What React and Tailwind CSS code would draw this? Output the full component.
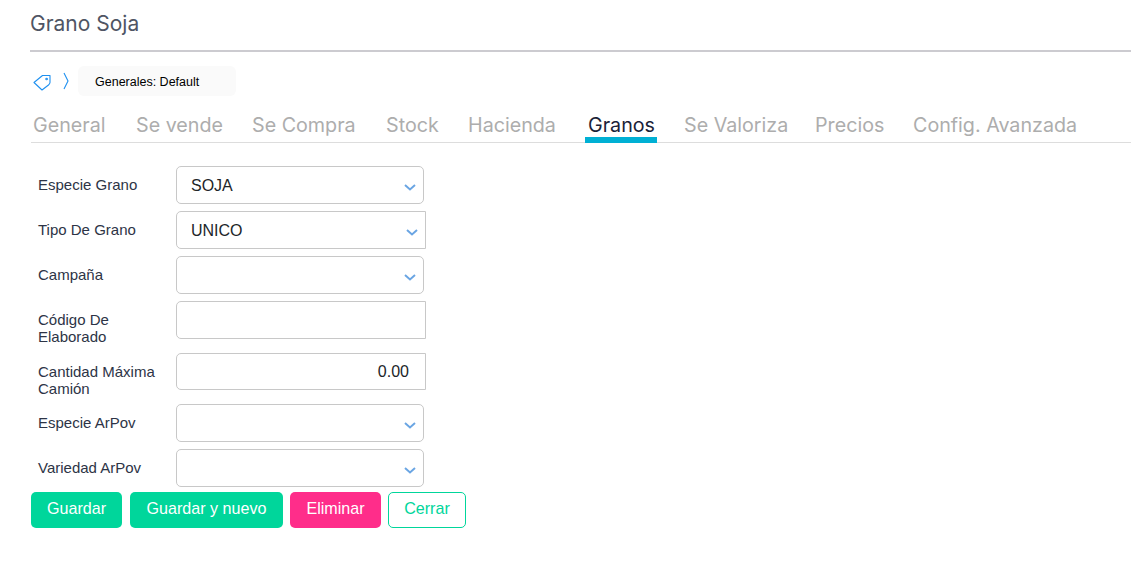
import { useState } from "react";

const heading = "font-['Inter','Noto_Sans',sans-serif]";
const tabs = [
  { name: "General", w: "w-[73px]" },
  { name: "Se vende", w: "w-[86px]" },
  { name: "Se Compra", w: "w-[104px]" },
  { name: "Stock", w: "w-[52px]" },
  { name: "Hacienda", w: "w-[90px]" },
  { name: "Granos", w: "w-[66px]", active: true },
  { name: "Se Valoriza", w: "w-[101px]" },
  { name: "Precios", w: "w-[68px]" },
  { name: "Config. Avanzada", w: "w-[164px]" },
];

function Chevron({ className }) {
  return (
    <svg viewBox="0 0 12 7" className={className} fill="none">
      <path d="M1 1l5 4.4L11 1" stroke="#6aa5e3" strokeWidth="2" />
    </svg>
  );
}

function Row({ label, pad = "pt-[10px]", children }) {
  return (
    <div className="flex items-start mb-[7px]">
      <div className={`w-[145px] pl-[7px] pr-[11px] text-[15px] leading-[17px] text-[#2d3446] ${pad}`}>{label}</div>
      {children}
    </div>
  );
}

function SelectBox({ value, square }) {
  return (
    <div
      className={`relative h-[38px] flex items-center pl-[14px] pt-[1px] text-[16px] text-[#212529] border border-[#c8c8c8] ${
        square ? "w-[250px] rounded-l-[5px]" : "w-[248px] rounded-[5px]"
      }`}
    >
      {value}
      <Chevron className="absolute top-[17px] right-[7px] w-[12px] h-[7px]" />
    </div>
  );
}

export default function App() {
  const [activeTab, setActiveTab] = useState("Granos");

  return (
    <div className="min-h-[562px] bg-white pl-[31px] font-['Liberation_Sans',Arial,sans-serif]">
      <div className={`h-[52px] pt-[10px] -ml-[1px] pl-0 border-b-2 border-[#cccbd0] text-[21px] leading-[28px] text-[#4f5564] ${heading}`}>
        Grano Soja
      </div>

      <div className="flex items-center mt-[14px] h-[30px]">
        <svg viewBox="0 0 18 17" className="w-[18px] h-[17px] ml-[2px] mt-[2px]" fill="none" stroke="#1e90f0" strokeWidth="1.1">
          <path d="M1 8.5L9.5 1.5H17V8.5C17 9.5 16.5 10 15.5 11L9 16Z" strokeLinejoin="round" />
          <circle cx="13.6" cy="5" r="0.8" />
        </svg>
        <svg viewBox="0 0 6 18" className="w-[6px] h-[18px] ml-[12px]" fill="none" stroke="#1e90f0" strokeWidth="1.1">
          <path d="M1 1l4 8-4 8" />
        </svg>
        <div className="ml-[9px] w-[158px] h-[30px] flex items-center pl-[17px] pt-[2px] rounded-[6px] bg-[#fafafa] text-[12.5px] text-black">
          Generales: Default
        </div>
      </div>

      <div className={`flex h-[47px] border-b border-[#dddddd] pl-[2px] ${heading}`}>
        {tabs.map((tab) => (
          <div key={tab.name} className={`relative ${tab.w} mr-[30px] last:mr-0 pt-[15px] whitespace-nowrap text-[19.7px] leading-[29px] ${
            activeTab === tab.name ? "text-[#1a2238]" : "text-[#adadad]"
          }`} onClick={() => setActiveTab(tab.name)}>
            {tab.name}
            {activeTab === tab.name && (
              <span className="absolute left-[-3px] right-[-3px] bottom-[-1px] h-[6px] bg-[#00b0d4]" />
            )}
          </div>
        ))}
      </div>

      <div className="mt-[23px]">
        <Row label="Especie Grano"><SelectBox value="SOJA" /></Row>
        <Row label="Tipo De Grano"><SelectBox value="UNICO" square /></Row>
        <Row label="Campaña"><SelectBox /></Row>
        <Row label="Código De Elaborado" pad="pt-[10px] pb-[1px]">
          <input className="w-[250px] h-[38px] border border-[#c8c8c8] rounded-l-[5px] outline-none" />
        </Row>
        <Row label="Cantidad Máxima Camión">
          <input defaultValue="0.00" className="w-[250px] h-[37px] pr-[16px] text-right text-[16px] text-[#212529] border border-[#c8c8c8] rounded-l-[5px] outline-none" />
        </Row>
        <Row label="Especie ArPov"><SelectBox /></Row>
        <div className="-mb-[2px]">
          <Row label="Variedad ArPov"><SelectBox /></Row>
        </div>
      </div>

      <div className="flex text-[16.1px]">
        <button className="w-[91px] h-[36px] pb-[3px] rounded-[5px] bg-[#00d69b] text-white">Guardar</button>
        <button className="w-[153px] h-[36px] pb-[3px] ml-[8px] rounded-[5px] bg-[#00d69b] text-white">Guardar y nuevo</button>
        <button className="w-[91px] h-[36px] pb-[3px] ml-[7px] rounded-[5px] bg-[#ff2d8a] text-white">Eliminar</button>
        <button className="w-[78px] h-[36px] pb-[3px] ml-[7px] rounded-[5px] border border-[#00d69b] text-[#00d69b]">Cerrar</button>
      </div>
    </div>
  );
}
